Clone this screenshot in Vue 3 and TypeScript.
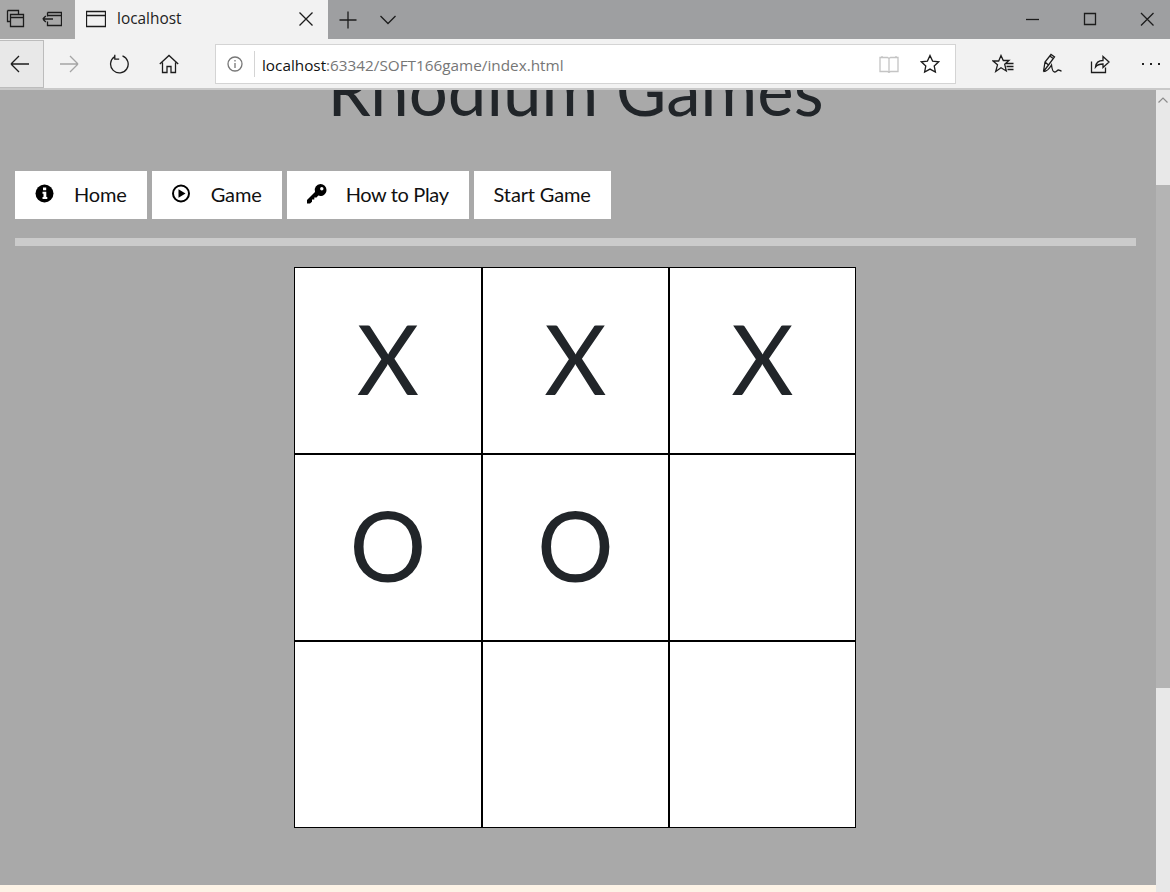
<script setup lang="ts">
const board: string[] = ['X', 'X', 'X', 'O', 'O', '', '', '', '']
</script>

<template>
  <div class="browser">
    <header class="titlebar">
      <div class="tab-actions">
        <svg class="ico" viewBox="0 0 20 20" width="20" height="20">
          <path d="M2.500 1.500h11v4M2.500 1.500v11h3M5.500 5.500h13v12h-13zM5.500 8.500h13" />
        </svg>
        <svg class="ico" viewBox="0 0 20 20" width="20" height="20">
          <path d="M5.500 3.500h14v13h-14v-4M5.500 7.500v-4M5.500 6.500h14M11 10H.8M.8 10l3-3M.8 10l3 3" />
        </svg>
      </div>
      <div class="tab">
        <svg class="ico" viewBox="0 0 20 18" width="20" height="18">
          <path d="M.5 1.500h19v15H.5zM.5 5.500h19" />
        </svg>
        <span class="tab-title">localhost</span>
        <svg class="ico tab-close" viewBox="0 0 14 14" width="14" height="14">
          <path d="M.5.5l13 13M13.500.5l-13 13" />
        </svg>
      </div>
      <svg class="ico new-tab" viewBox="0 0 18 18" width="18" height="18">
        <path d="M9 .5v17M.5 9h17" />
      </svg>
      <svg class="ico tab-list" viewBox="0 0 16 10" width="16" height="10">
        <path d="M.5 1l7.500 7.500L15.500 1" />
      </svg>
      <div class="window-controls">
        <svg class="ico" viewBox="0 0 20 20" width="20" height="20"><path d="M3 10.500h13" /></svg>
        <svg class="ico" viewBox="0 0 20 20" width="20" height="20"><path d="M4.500 4.500h11v11h-11z" /></svg>
        <svg class="ico" viewBox="0 0 20 20" width="20" height="20"><path d="M4 4l12.500 12.500M16.500 4L4 16.500" /></svg>
      </div>
    </header>

    <div class="toolbar">
      <div class="nav-btn active">
        <svg class="ico" viewBox="0 0 20 20" width="20" height="20"><path d="M1 10h18M1 10l8-8M1 10l8 8" /></svg>
      </div>
      <div class="nav-btn">
        <svg class="ico faded" viewBox="0 0 20 20" width="20" height="20"><path d="M1 10h18M19 10l-8-8M19 10l-8 8" /></svg>
      </div>
      <div class="nav-btn">
        <svg class="ico" viewBox="0 0 20 20" width="20" height="20">
          <path d="M5.500 2.800A8.800 8.800 0 1 0 13.500 1.900M5.800 .8v4.400h4.400" />
        </svg>
      </div>
      <div class="nav-btn">
        <svg class="ico" viewBox="0 0 20 20" width="20" height="20">
          <path d="M.8 10L10 1.500 19.200 10M3.500 8.500v10h4.500v-6h4v6h4.500v-10" />
        </svg>
      </div>
      <div class="address">
        <svg class="ico info" viewBox="0 0 16 16" width="16" height="16">
          <circle cx="8" cy="8" r="7" />
          <path d="M8 7v5M8 4v1.500" />
        </svg>
        <span class="address-url"><b>localhost</b>:63342/SOFT166game/index.html</span>
        <svg class="ico book" viewBox="0 0 20 18" width="20" height="18">
          <path d="M1 2.500h7.500l1.500 1 1.500-1H19v14h-7.500l-1.500 1-1.500-1H1zM10 3.500v13M3 1v1.500M17 1v1.500" />
        </svg>
        <svg class="ico star" viewBox="0 0 20 20" width="20" height="20">
          <path d="M10 1.500l2.600 5.600 6.100.7-4.500 4.200 1.200 6.100L10 15.100l-5.400 3 1.200-6.100-4.500-4.200 6.100-.7z" />
        </svg>
      </div>
      <div class="tools">
        <svg class="ico" viewBox="0 0 22 20" width="22" height="20">
          <path d="M9 1.500l2.300 5h5.700l-4.300 3.800 1.600 6.700L9 13.800l-5.300 3.700 1.800-6.700L1 7h5.700zM13.500 9.500h8M14.500 12.500h7M15.500 15.500h6" />
        </svg>
        <svg class="ico" viewBox="0 0 20 22" width="20" height="22">
          <path d="M1.500 18.500L3 9l6-7.500 3.500 2.500-6 8zM3 9l3.500 3M7.500 2.800l4 3M1.500 18.500c4 0 6-3 8-6.500.5 4 1 7 3 7 2 0 2.500-2 4-2 1 0 1.500 1 3 1" />
        </svg>
        <svg class="ico" viewBox="0 0 20 20" width="20" height="20">
          <path d="M1.500 7.500v11h14v-5M5.500 13C6 8.500 8.500 6.500 13 6.500V2.500l6 5.500-6 5.500V10C9.500 10 7 11 5.500 13z" />
        </svg>
        <div class="more"><i></i><i></i><i></i></div>
      </div>
    </div>

    <div class="viewport">
      <main class="content">
        <h1 class="brand">Rhodium Games</h1>
        <nav class="menu">
          <a class="menu-item">
            <svg class="menu-icon" viewBox="0 0 20 20" width="20" height="20">
              <circle cx="9.500" cy="9.500" r="9" fill="#000" />
              <path fill="#fff" d="M8 3.500h3.200v2.800H8zM7.500 7.800h3.800v5.200h1v2H7.500v-2h1v-3.200h-1z" />
            </svg>
            Home
          </a>
          <a class="menu-item">
            <svg class="menu-icon" viewBox="0 0 20 20" width="20" height="20">
              <circle cx="9" cy="9.500" r="8" fill="none" stroke="#000" stroke-width="2" />
              <path fill="#000" d="M6.500 5.200l7 4.300-7 4.300z" />
            </svg>
            Game
          </a>
          <a class="menu-item tight">
            <svg class="menu-icon" viewBox="0 0 20 20" width="20" height="20">
              <path
                fill="#000"
                fill-rule="evenodd"
                d="M13.500 0a6 6 0 0 1 6 6 6 6 0 0 1-8.200 5.600L9.500 13.400H7.300v2.200H5v2.200L3 19.500H0v-3.600l8-8A6 6 0 0 1 13.500 0zm1.300 3a1.700 1.700 0 1 0 0 3.400 1.700 1.700 0 0 0 0-3.400z"
              />
            </svg>
            How to Play
          </a>
          <a class="menu-item">Start Game</a>
        </nav>
        <div class="rule"></div>
        <section class="board">
          <div v-for="(mark, i) in board" :key="i" class="cell">{{ mark }}</div>
        </section>
        <div class="notice"></div>
      </main>
      <aside class="scrollbar">
        <svg class="scroll-up" viewBox="0 0 10 6" width="10" height="6"><path d="M.5 5.500L5 1l4.500 4.500" /></svg>
        <div class="scroll-thumb"></div>
      </aside>
    </div>
  </div>
</template>

<style>
html,
body {
  margin: 0;
  overflow: hidden;
}
</style>

<style scoped>
.browser {
  width: 1170px;
  height: 892px;
  display: flex;
  flex-direction: column;
  overflow: hidden;
  font-family: "Open Sans", "Liberation Sans", sans-serif;
}

.ico {
  fill: none;
  stroke: #1c1c1c;
  stroke-width: 1.3;
  flex: none;
}

.titlebar {
  height: 39px;
  flex: none;
  display: flex;
  align-items: center;
  background: #9e9fa1;
}

.tab-actions {
  width: 75px;
  height: 100%;
  display: flex;
  align-items: center;
  gap: 17px;
  padding: 0 0 2px 5px;
  box-sizing: border-box;
  background: #a8a8a8;
}

.tab {
  width: 253px;
  height: 100%;
  display: flex;
  align-items: center;
  padding: 0 15px 2px 11px;
  box-sizing: border-box;
  background: #f2f2f2;
}

.tab-title {
  margin-left: 11px;
  font-size: 15.4px;
  color: #222;
}

.tab-close {
  margin-left: auto;
}

.new-tab {
  margin-left: 11px;
}

.tab-list {
  margin-left: 23px;
}

.window-controls {
  margin-left: auto;
  display: flex;
  gap: 37px;
  padding: 0 13px 2px 0;
}

.toolbar {
  height: 51px;
  flex: none;
  display: flex;
  align-items: center;
  background: #f2f2f2;
  border-bottom: 2px solid #c9c9c9;
  box-sizing: border-box;
}

.nav-btn {
  width: 50px;
  height: 48px;
  display: flex;
  align-items: center;
  justify-content: center;
  flex: none;
}

.nav-btn.active {
  width: 44px;
  padding-right: 4px;
  box-sizing: border-box;
  background: #e8e8e8;
  border: 1px solid #bcbcbc;
  border-left: 0;
}

.faded {
  stroke: #a5a5a5;
}

.address {
  width: 741px;
  height: 40px;
  margin-left: 21px;
  display: flex;
  align-items: center;
  box-sizing: border-box;
  background: #fff;
  border: 1px solid #d4d4d4;
  flex: none;
}

.info {
  stroke: #777;
  margin-left: 11px;
}

.address-url {
  margin-left: 11px;
  padding: 1px 0 0 7px;
  box-sizing: border-box;
  height: 26px;
  line-height: 26px;
  border-left: 1px solid #d4d4d4;
  font-size: 15.3px;
  color: #767676;
}

.address-url b {
  font-weight: 400;
  color: #111;
}

.book {
  margin-left: auto;
  stroke: #c4c4c4;
}

.star {
  margin: 0 15px 0 21px;
}

.tools {
  margin-left: 36px;
  display: flex;
  align-items: center;
  gap: 28px;
}

.more {
  display: flex;
  gap: 6px;
  margin-left: 4px;
}

.more i {
  width: 2px;
  height: 2px;
  background: #222;
}

.viewport {
  flex: 1;
  min-height: 0;
  display: flex;
}

.content {
  flex: 1;
  min-width: 0;
  display: flex;
  flex-direction: column;
  overflow: hidden;
  padding: 0 20px 0 15px;
  background: #a9a9a9;
}

/* page is scrolled a little in the shot, so the heading sits under the toolbar */
.brand {
  margin: -8px 0 0;
  height: 16px;
  line-height: 16px;
  flex: none;
  text-align: center;
  font-family: Lato, sans-serif;
  font-size: 69px;
  font-weight: 400;
  color: #212529;
  white-space: nowrap;
}

.menu {
  margin-top: 73px;
  display: flex;
  gap: 5px;
  flex: none;
}

.menu-item {
  height: 48px;
  display: flex;
  align-items: center;
  padding: 0 20px 2px;
  box-sizing: border-box;
  background: #fff;
  font-family: Lato, sans-serif;
  font-size: 20px;
  letter-spacing: -.15px;
  color: #111;
}

.menu-item.tight {
  letter-spacing: -.35px;
}

.menu-icon {
  margin-right: 19px;
  flex: none;
}

.rule {
  height: 8px;
  margin-top: 19px;
  flex: none;
  background: #cbcbcb;
}

.board {
  width: 562px;
  height: 561px;
  margin: 21px 0 0 279px;
  padding: 1px;
  box-sizing: border-box;
  flex: none;
  display: grid;
  grid-template-columns: 186px 185px 185px;
  grid-template-rows: repeat(3, 185px);
  gap: 2px;
  background: #000;
}

.cell {
  display: flex;
  align-items: center;
  justify-content: center;
  padding-bottom: 5px;
  box-sizing: border-box;
  background: #fff;
  font-family: Lato, sans-serif;
  font-size: 96px;
  line-height: 1;
  color: #212529;
}

.notice {
  height: 7px;
  margin: auto -20px 0 -15px;
  flex: none;
  background: #fdf3e6;
}

.scrollbar {
  width: 14px;
  flex: none;
  display: flex;
  flex-direction: column;
  align-items: center;
  background: #e8e8e8;
}

.scroll-up {
  margin-top: 7px;
  fill: none;
  stroke: #8c8c8c;
  stroke-width: 1.2;
  flex: none;
}

.scroll-thumb {
  width: 100%;
  height: 503px;
  margin-top: 82px;
  flex: none;
  background: #b4b4b4;
}
</style>
